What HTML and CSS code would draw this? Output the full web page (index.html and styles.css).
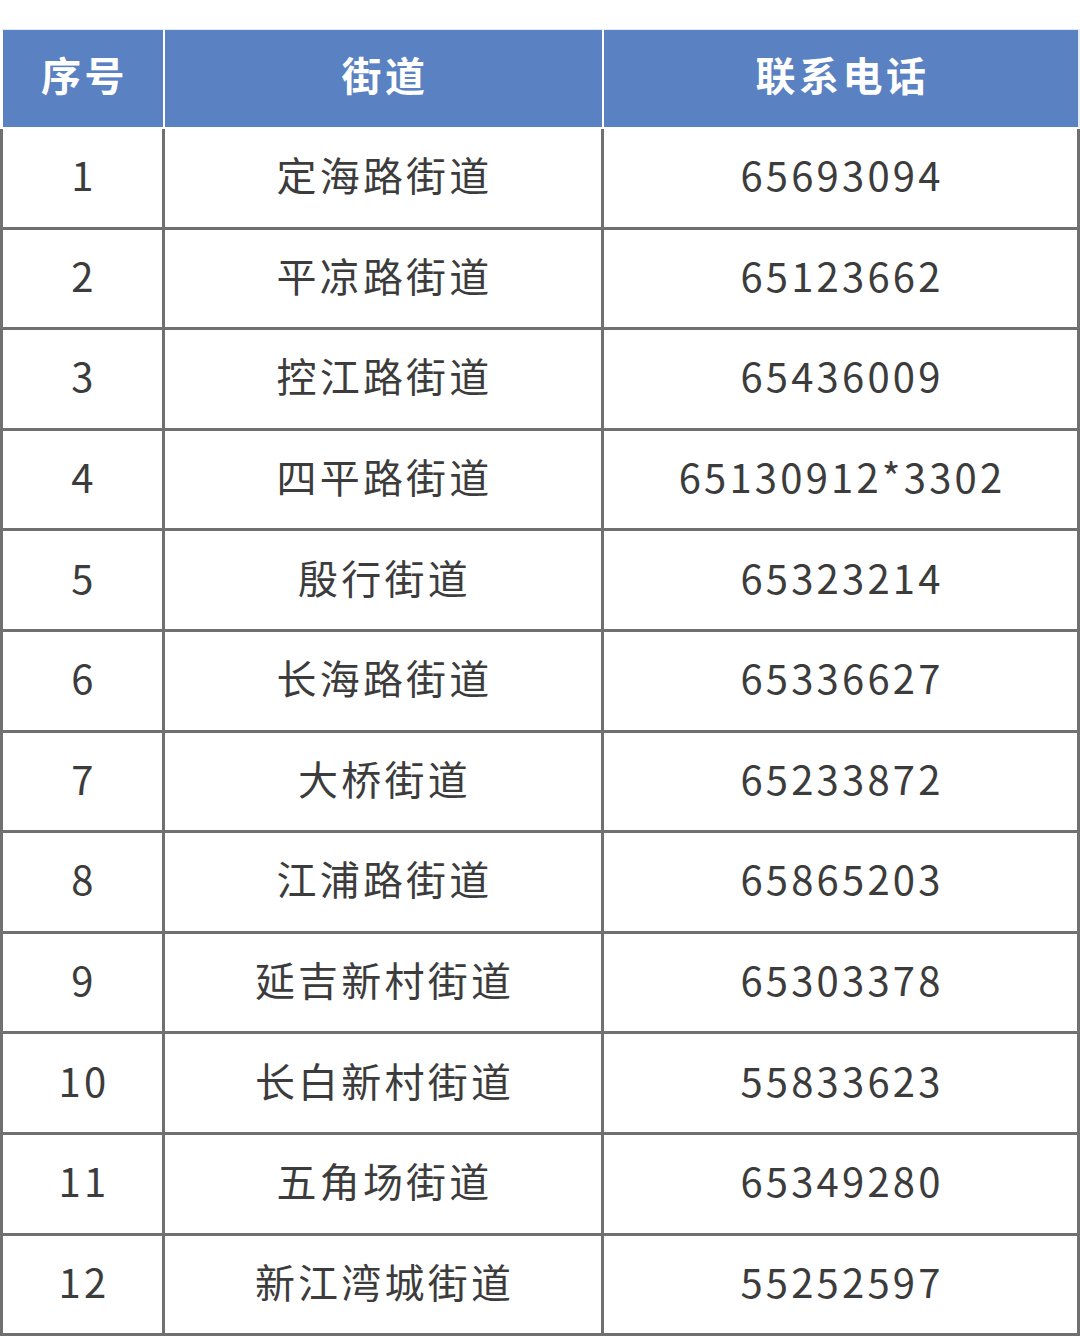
FILE: index.html
```html
<!DOCTYPE html>
<html lang="zh-CN">
<head>
<meta charset="utf-8">
<title>街道联系电话</title>
<link rel="stylesheet" href="styles.css">
</head>
<body>
<table class="contacts">
  <colgroup>
    <col class="c-no">
    <col class="c-name">
    <col class="c-tel">
  </colgroup>
  <thead>
    <tr><th>序号</th><th>街道</th><th>联系电话</th></tr>
  </thead>
  <tbody>
    <tr><td>1</td><td>定海路街道</td><td>65693094</td></tr>
    <tr><td>2</td><td>平凉路街道</td><td>65123662</td></tr>
    <tr><td>3</td><td>控江路街道</td><td>65436009</td></tr>
    <tr><td>4</td><td>四平路街道</td><td>65130912*3302</td></tr>
    <tr><td>5</td><td>殷行街道</td><td>65323214</td></tr>
    <tr><td>6</td><td>长海路街道</td><td>65336627</td></tr>
    <tr><td>7</td><td>大桥街道</td><td>65233872</td></tr>
    <tr><td>8</td><td>江浦路街道</td><td>65865203</td></tr>
    <tr><td>9</td><td>延吉新村街道</td><td>65303378</td></tr>
    <tr><td>10</td><td>长白新村街道</td><td>55833623</td></tr>
    <tr><td>11</td><td>五角场街道</td><td>65349280</td></tr>
    <tr><td>12</td><td>新江湾城街道</td><td>55252597</td></tr>
  </tbody>
</table>
</body>
</html>
```

FILE: styles.css
```css
html, body {
  margin: 0;
  padding: 0;
  background: #ffffff;
}
body {
  padding-top: 29px;
  font-family: "Noto Sans CJK SC", "Noto Sans", sans-serif;
}
.contacts {
  width: 1080px;
  border-collapse: separate;
  border-spacing: 0;
  table-layout: fixed;
}
.c-no { width: 165px; }
.c-name { width: 439px; }
.c-tel { width: 476px; }

.contacts th {
  height: 100px;
  padding: 0 0 10px 3px;
  box-sizing: border-box;
  background: #5a81c1;
  background-clip: padding-box;
  color: #ffffff;
  font-size: 40px;
  font-weight: 700;
  letter-spacing: 3.5px;
  text-align: center;
  vertical-align: middle;
  border-top: 1px solid #dfe7f3;
  border-right: 2px solid #ffffff;
  border-bottom: 2px solid #ffffff;
  line-height: 1;
}
.contacts th:first-child {
  border-left: 3px solid #ffffff;
}
.contacts th:last-child {
  border-right: 2px solid #e6ecf5;
}
.contacts td {
  height: 100.6px;
  padding: 0 0 7px 3px;
  box-sizing: border-box;
  color: #3c3c3c;
  font-size: 40px;
  font-weight: 400;
  letter-spacing: 3.2px;
  text-align: center;
  vertical-align: middle;
  border-right: 3px solid #707070;
  border-bottom: 3px solid #707070;
  line-height: 1;
}
.contacts td:first-child {
  border-left: 3px solid #707070;
}
```
